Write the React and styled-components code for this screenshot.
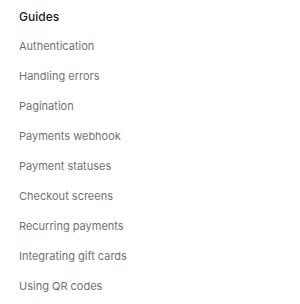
import React from 'react'
import styled, { createGlobalStyle } from 'styled-components'

const Global = createGlobalStyle`
  body {
    margin: 0;
    background: #ffffff;
    font-family: Inter, "Liberation Sans", sans-serif;
  }
`

const Nav = styled.nav`
  width: 300px;
  height: 304px;
  padding: 8px 19px 0;
  box-sizing: border-box;
`

const Heading = styled.h3`
  margin: 0;
  height: 18px;
  line-height: 18px;
  font-size: 12px;
  font-weight: 500;
  color: #1a1a1a;
`

const List = styled.ul`
  list-style: none;
  margin: 5px 0 0;
  padding: 0;
  display: flex;
  flex-direction: column;
`

const Item = styled.li`
  height: 30px;
  line-height: 30px;
  font-size: 11px;
  color: #727272;
`

const links = [
  'Authentication',
  'Handling errors',
  'Pagination',
  'Payments webhook',
  'Payment statuses',
  'Checkout screens',
  'Recurring payments',
  'Integrating gift cards',
  'Using QR codes',
]

export default function App() {
  return (
    <>
      <Global />
      <Nav>
        <Heading>Guides</Heading>
        <List>
          {links.map((l) => (
            <Item key={l}>{l}</Item>
          ))}
        </List>
      </Nav>
    </>
  )
}
